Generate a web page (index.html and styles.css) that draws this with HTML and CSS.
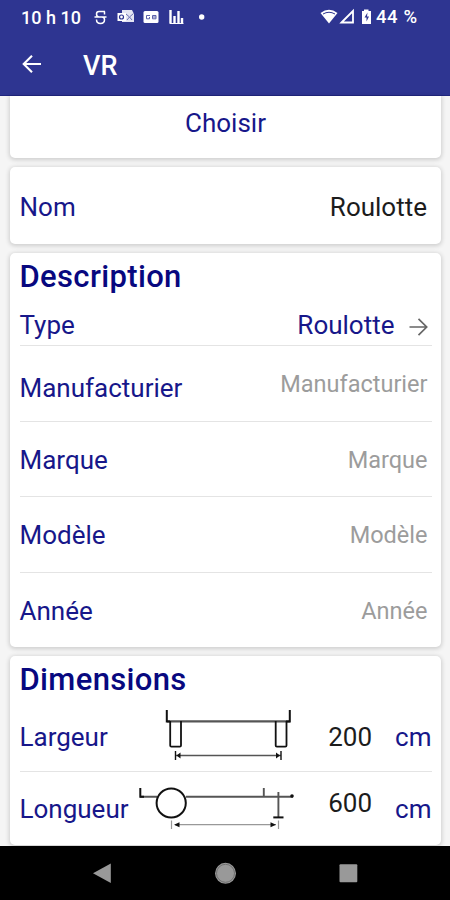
FILE: index.html
```html
<!DOCTYPE html>
<html lang="fr">
<head>
<meta charset="utf-8">
<title>VR</title>
<link rel="stylesheet" href="styles.css">
</head>
<body>
<div class="phone">
  <header class="top">
    <div class="status">
      <span class="clock">10 h 10</span>
      <svg class="notif" width="120" height="18" viewBox="91 8 120 18" fill="none" stroke="#fff">
        <path d="M105 11.500H99Q96.500 11.500 96.500 14Q96.500 16.900 99 16.900H102Q104.500 16.900 104.500 19.800Q104.500 23.500 100.500 23.500Q96.500 23.500 96.500 19.500M94.500 16.900H106.500M104.500 11.500V14.500" stroke-width="1.500"/>
        <path d="M122 10H132L134 14V22H122Z" fill="#e4e5f3" stroke="none"/>
        <path d="M117.500 13H126V21H117.500Z" fill="#fff" stroke="none"/>
        <circle cx="121.500" cy="17" r="2" stroke="#2e3591" stroke-width="1.200"/>
        <path d="M126 14L129.500 17L133.500 13.500M127 20L129.500 17L132 20" stroke="#6d72b3"/>
        <rect x="143.500" y="11" width="15" height="12" rx="1.500" fill="#fff" stroke="none"/>
        <path d="M150 15.500H146.500V18.800H149.500V17M152.500 15.500H156V18.800H152.500ZM152.500 17H156" stroke="#5c62aa" stroke-width="1"/>
        <path d="M170.500 10V23M174.500 16V23M178.500 11V23M182 18V23" stroke-width="2.400"/><path d="M169.500 23.500H183.500"/>
        <circle cx="201.700" cy="17" r="2.700" fill="#fff" stroke="none"/>
      </svg>
      <svg class="radio" width="54" height="18" viewBox="320 8 54 18" fill="none" stroke="#fff">
        <path d="M321.500 13Q330 6.500 338.500 13L330 23.500Z" fill="#fff" stroke="none"/>
        <path d="M324 14Q330 10.500 336 14" stroke="#2e3591"/>
        <path d="M342.500 22.500L354 11V22.500Z" stroke-width="1.800"/>
        <path d="M363 11H365V9.500H369.500V11H372V24H363Z" fill="#fff" stroke="none"/>
        <path d="M368.500 12.500L365.500 17.500H367.500V21.500L370 16.500H368Z" fill="#2e3591" stroke="none"/>
      </svg>
      <span class="battery">44 %</span>
    </div>
    <div class="appbar">
      <svg width="20" height="20" viewBox="22 54 20 20" fill="none" stroke="#fff" stroke-width="2.100"><path d="M41 64H24M32 55.700L23.700 64L32 72.300"/></svg>
      <h1>VR</h1>
    </div>
  </header>
  <main class="content">
    <section class="card choose"><span>Choisir</span></section>
    <section class="card name"><span>Nom</span><span class="entry">Roulotte</span></section>
    <section class="card description">
      <h2>Description</h2>
      <div class="row type"><span>Type</span><span class="pick">Roulotte</span>
        <svg width="19" height="20" viewBox="409 317 19 20" fill="none" stroke="#666" stroke-width="1.700"><path d="M409.500 327H426M418.500 318.800L426.700 327L418.500 335.200"/></svg>
      </div>
      <div class="row maker"><span>Manufacturier</span><span class="hint">Manufacturier</span></div>
      <div class="row"><span>Marque</span><span class="hint">Marque</span></div>
      <div class="row"><span>Modèle</span><span class="hint">Modèle</span></div>
      <div class="row"><span>Année</span><span class="hint">Année</span></div>
    </section>
    <section class="card dimensions">
      <h2>Dimensions</h2>
      <div class="measure width">
        <span>Largeur</span>
        <svg width="165" height="60" viewBox="135 706 165 60" fill="none" stroke="#111">
          <path d="M167 721.300H290" stroke="#555" stroke-width="2.200"/>
          <path d="M166.800 710V721.500H170M289.800 710V721.500H286" stroke-width="2"/>
          <path d="M170.200 721V745.500Q170.200 746.700 171.400 746.700H179.800Q181 746.700 181 745.500V721M275.700 721V745.500Q275.700 746.700 276.900 746.700H285.300Q286.500 746.700 286.500 745.500V721" stroke-width="1.800"/>
          <path d="M176 755.500H281" stroke="#555" stroke-width="1.300"/>
          <path d="M175.500 751V760M281 751V760" stroke-width="1.400"/>
          <path d="M176.500 755.500L180.500 752.500V758.500ZM280 755.500L276 752.500V758.500Z" fill="#111" stroke="none"/>
        </svg>
        <span class="num">200</span><span class="unit">cm</span>
      </div>
      <div class="measure length">
        <span>Longueur</span>
        <svg width="165" height="50" viewBox="135 783 165 50" fill="none" stroke="#111">
          <path d="M140 796.800H157M186 796.800H293" stroke="#555" stroke-width="2"/>
          <path d="M140.300 788V796.800H144" stroke-width="2"/>
          <circle cx="171.200" cy="803" r="14.600" stroke-width="2"/>
          <path d="M263.800 788V797M278.400 792V817" stroke="#555" stroke-width="1.900"/>
          <path d="M273.300 817.400H283.500" stroke-width="2"/>
          <circle cx="292" cy="796" r="1.800" fill="#111" stroke="none"/>
          <path d="M175 824.700H276" stroke="#999" stroke-width="1.200"/>
          <path d="M171.500 820.500V829M278.500 820.500V829" stroke="#999" stroke-width="1.200"/>
          <path d="M174 824.700L179.500 822.200V827.200ZM276 824.700L270.500 822.200V827.200Z" fill="#111" stroke="none"/>
        </svg>
        <span class="num">600</span><span class="unit">cm</span>
      </div>
    </section>
  </main>
  <nav class="nav">
    <svg width="450" height="54" viewBox="0 846 450 54" fill="#999"><path d="M93 873.300L110.800 863.500V883Z"/><circle cx="225.500" cy="873.300" r="10.500"/><circle cx="225.500" cy="873.300" r="9" fill="none" stroke="#666" stroke-width=".8"/><rect x="339.500" y="864.300" width="17.800" height="18" rx="1"/></svg>
  </nav>
</div>
</body>
</html>
```
FILE: styles.css
```css
* { box-sizing: border-box; }
body { margin: 0; font-family: Roboto, sans-serif; font-weight: 400; color: #17178a; }
.phone { width: 450px; height: 900px; display: flex; flex-direction: column; overflow: hidden; background: #f5f5f5; }
.top { height: 96px; background: #2e3591; border-bottom: 1px solid #20267f; color: #fff; flex: none; }
.status { height: 34px; display: flex; align-items: center; padding: 0 32px 0 21px; font-weight: 500; font-size: 18px; }
.clock { width: 70px; white-space: nowrap; }
.radio { margin-left: auto; margin-right: 3px; }
.battery { width: 42px; white-space: nowrap; font-size: 18.500px; letter-spacing: .6px; }
.appbar { height: 61px; display: flex; align-items: center; padding-left: 22px; gap: 41px; }
.appbar svg { margin-top: -2px; }
h1 { margin: 3px 0 0; font-size: 27px; font-weight: 500; line-height: 32px; }
.content { flex: 1; min-height: 0; display: flex; flex-direction: column; gap: 9px; padding: 0 9px 0 9.5px; font-size: 26px; line-height: 30px; }
.card { flex: none; background: #fff; border-radius: 5px; padding: 0 9.5px 0 10px; box-shadow: 0 1px 4px 1px rgba(0,0,0,.16); }
.choose { height: 62px; display: flex; justify-content: center; padding-top: 12px; border-radius: 0 0 5px 5px; }
.name { height: 77px; display: flex; justify-content: space-between; align-items: center; padding-top: 2px; padding-right: 14px; }
.entry, .num { color: #1c1c1c; }
.description { height: 394px; padding-top: 1px; }
h2 { margin: 0; font-size: 31px; font-weight: 500; letter-spacing: .35px; line-height: 46px; color: #08087f; }
.row { height: 75.500px; display: flex; align-items: center; justify-content: space-between; border-bottom: 1.500px solid #e4e4e4; padding-top: 2px; padding-right: 4px; }
.row:last-child { border-bottom: 0; padding-top: 1px; }
.type { height: 46px; padding-top: 4px; }
.type svg { margin-top: 4px; }
.pick { margin-left: auto; margin-right: 14px; }
.maker span:first-child { padding-top: 7px; }
.hint { color: #9c9c9c; font-size: 23.500px; }
.dimensions { height: 189px; }
.dimensions h2 { padding-top: 1px; margin-bottom: -1px; }
.measure { height: 70px; display: grid; grid-template-columns: 115.500px 165px 72px 1fr; align-items: center; }
.width { border-bottom: 1.500px solid #e4e4e4; }
.width svg { margin-top: -2px; }
.num, .unit { text-align: right; }
.length > span { padding-top: 4px; }
.length .num { padding-top: 0; padding-bottom: 9px; }
.length svg { margin-top: 2px; }
.nav { height: 54px; background: #000; flex: none; }
.nav svg { display: block; }
```
